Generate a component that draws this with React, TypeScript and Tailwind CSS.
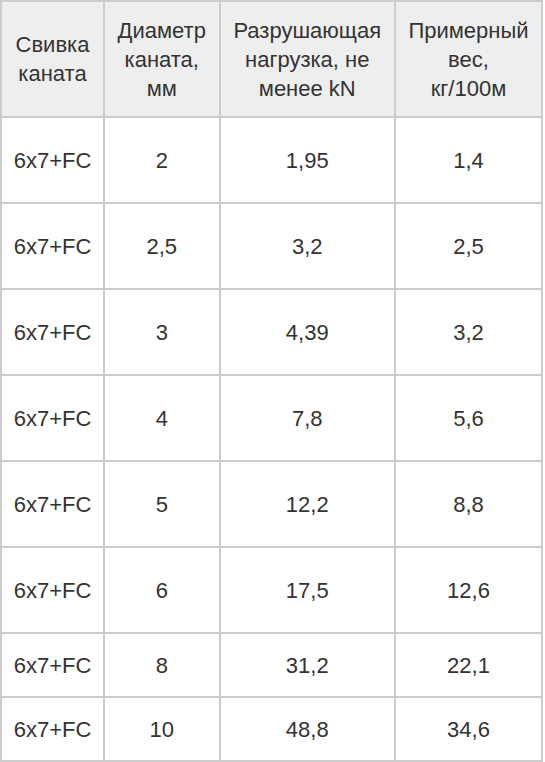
import type { ReactNode } from "react";

type Row = { lay: string; diam: string; load: string; weight: string; tall?: boolean };

const rows: Row[] = [
  { lay: "6x7+FC", diam: "2", load: "1,95", weight: "1,4", tall: true },
  { lay: "6x7+FC", diam: "2,5", load: "3,2", weight: "2,5", tall: true },
  { lay: "6x7+FC", diam: "3", load: "4,39", weight: "3,2", tall: true },
  { lay: "6x7+FC", diam: "4", load: "7,8", weight: "5,6", tall: true },
  { lay: "6x7+FC", diam: "5", load: "12,2", weight: "8,8", tall: true },
  { lay: "6x7+FC", diam: "6", load: "17,5", weight: "12,6", tall: true },
  { lay: "6x7+FC", diam: "8", load: "31,2", weight: "22,1" },
  { lay: "6x7+FC", diam: "10", load: "48,8", weight: "34,6" },
];

function Th({ children }: { children: ReactNode }) {
  return (
    <th className="border-2 border-[#cccccc] bg-[#eeeeee] px-[10px] text-center align-middle font-normal">
      {children}
    </th>
  );
}

function Td({ children }: { children: ReactNode }) {
  return <td className="border-2 border-[#cccccc] px-[10px] text-center align-middle">{children}</td>;
}

export default function App() {
  return (
    <div className="min-h-[762px] bg-white">
      <table
        className="w-[543px] table-fixed border-collapse text-[22px] leading-[29px] text-[#333333]"
        style={{ fontFamily: '"Liberation Sans", Arial, sans-serif' }}
      >
        <colgroup>
          <col className="w-[103px]" />
          <col className="w-[115.5px]" />
          <col className="w-[175.5px]" />
          <col className="w-[147px]" />
        </colgroup>
        <thead>
          <tr className="h-[116px]">
            <Th>
              Свивка
              <br />
              каната
            </Th>
            <Th>
              Диаметр
              <br />
              каната,
              <br />
              мм
            </Th>
            <Th>
              Разрушающая
              <br />
              нагрузка, не
              <br />
              менее kN
            </Th>
            <Th>
              Примерный
              <br />
              вес,
              <br />
              кг/100м
            </Th>
          </tr>
        </thead>
        <tbody>
          {rows.map((r, i) => (
            <tr key={i} className={r.tall ? "h-[86px]" : "h-[64px]"}>
              <Td>{r.lay}</Td>
              <Td>{r.diam}</Td>
              <Td>{r.load}</Td>
              <Td>{r.weight}</Td>
            </tr>
          ))}
        </tbody>
      </table>
    </div>
  );
}
